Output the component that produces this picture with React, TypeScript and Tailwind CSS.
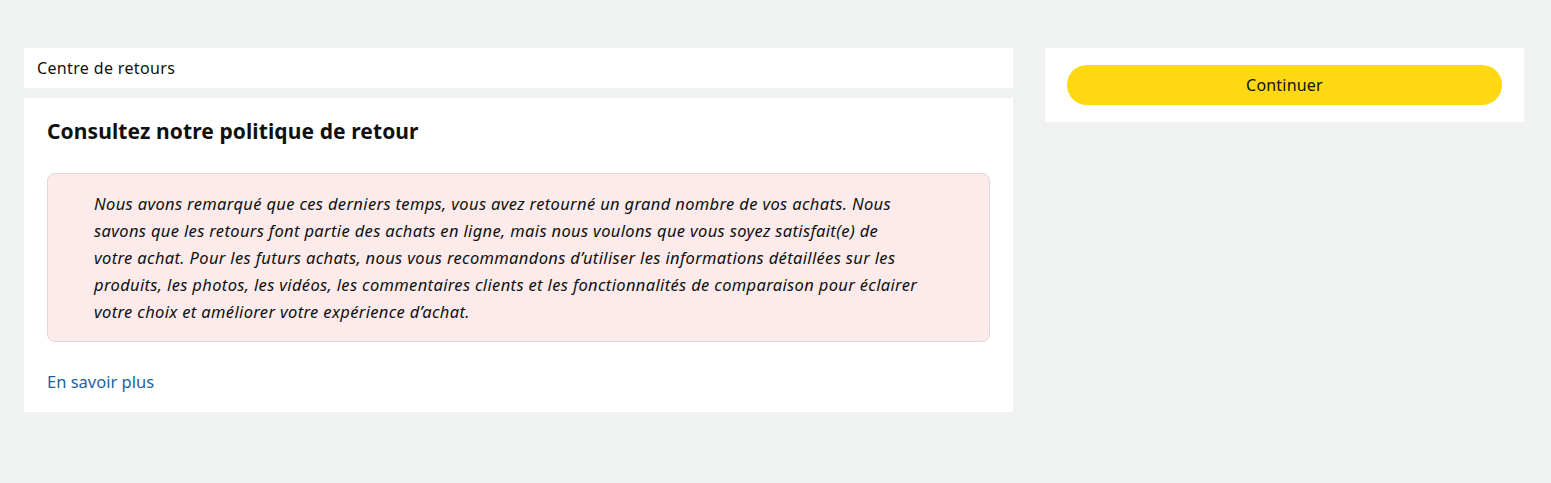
export default function App() {
  return (
    <div
      className="min-h-[483px] bg-[#f0f2f2] px-6 pt-12 text-[#0f1111]"
      style={{ fontFamily: '"Noto Sans", "Liberation Sans", sans-serif' }}
    >
      <div className="flex items-start gap-8">
        {/* Left column */}
        <div className="flex w-[989px] flex-col gap-[10px]">
          <div className="flex h-10 items-center bg-white px-[13px] text-[16px] tracking-[0.35px]">
            Centre de retours
          </div>

          <div className="bg-white px-[23px] pt-[19px] pb-[18px]">
            <h1 className="text-[21px] font-bold leading-[28px] tracking-[0.1px]">
              Consultez notre politique de retour
            </h1>

            <div className="mt-[28px] rounded-lg border border-[#e3d6d5] bg-[#fcebea] py-4 px-[46px]">
              <p className="text-[16.5px] italic leading-[27px] tracking-[0.35px]">
                Nous avons remarqué que ces derniers temps, vous avez retourné un grand nombre de vos achats. Nous
                <br />
                savons que les retours font partie des achats en ligne, mais nous voulons que vous soyez satisfait(e) de
                <br />
                votre achat. Pour les futurs achats, nous vous recommandons d’utiliser les informations détaillées sur les
                <br />
                produits, les photos, les vidéos, les commentaires clients et les fonctionnalités de comparaison pour éclairer
                <br />
                votre choix et améliorer votre expérience d’achat.
              </p>
            </div>

            <a href="#" className="mt-[28px] block text-[16.5px] leading-6 text-[#2162a1]">
              En savoir plus
            </a>
          </div>
        </div>

        {/* Right column */}
        <div className="w-[479px] bg-white px-[22px] py-[17px]">
          <button className="flex h-10 w-full items-center justify-center rounded-full bg-[#ffd814] text-[16px] tracking-[0.2px]">
            Continuer
          </button>
        </div>
      </div>
    </div>
  );
}
